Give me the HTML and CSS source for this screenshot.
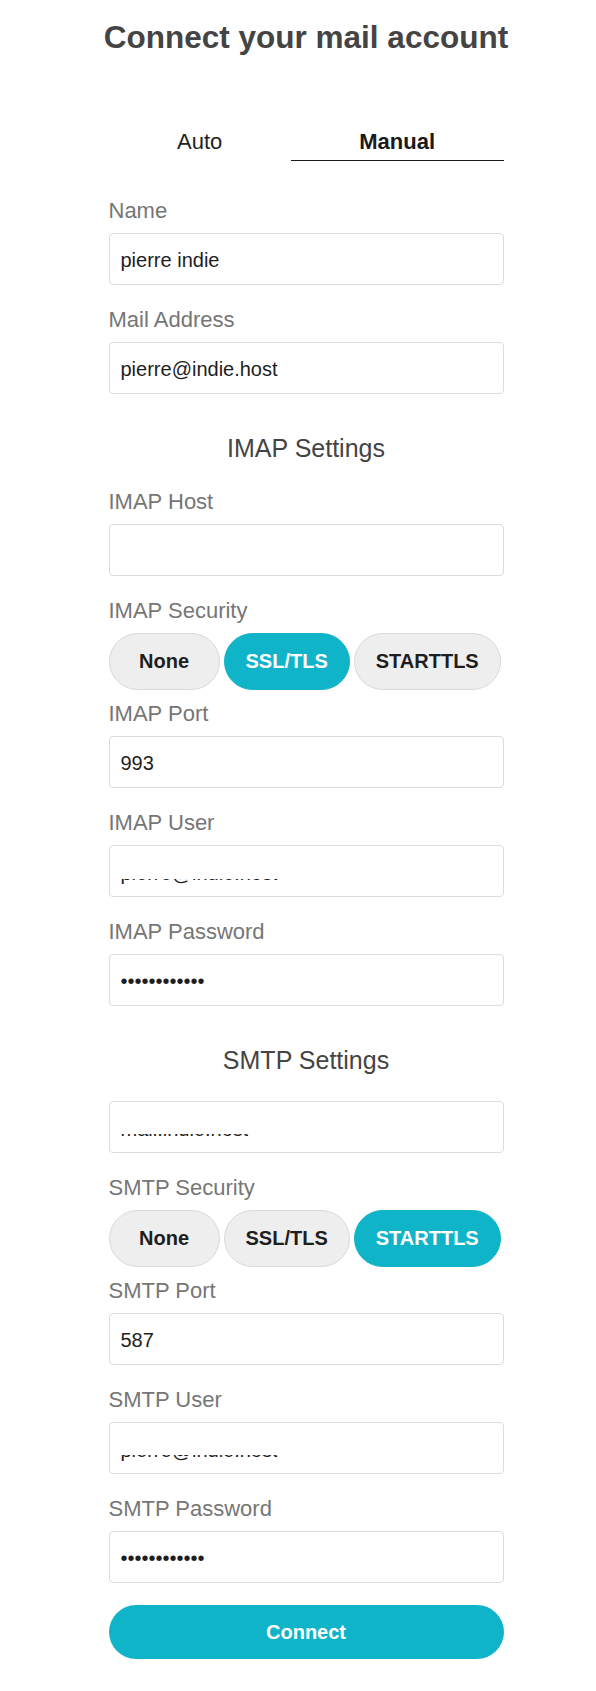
FILE: index.html
```html
<!DOCTYPE html>
<html lang="en">
<head>
<meta charset="utf-8">
<title>Connect your mail account</title>
<link rel="stylesheet" href="styles.css">
</head>
<body>
<div class="page">
  <h1 class="title">Connect your mail account</h1>
  <div class="tabs">
    <div class="tab">Auto</div>
    <div class="tab active">Manual</div>
  </div>
  <form class="form">
    <div class="field">
      <label class="label">Name</label>
      <input class="input" type="text" value="pierre indie">
    </div>
    <div class="field">
      <label class="label">Mail Address</label>
      <input class="input" type="text" value="pierre@indie.host">
    </div>

    <h2 class="section">IMAP Settings</h2>
    <div class="field">
      <label class="label">IMAP Host</label>
      <input class="input" type="text" value="">
    </div>
    <div class="field field-choice">
      <label class="label">IMAP Security</label>
      <div class="choices">
        <button type="button" class="choice">None</button>
        <button type="button" class="choice selected">SSL/TLS</button>
        <button type="button" class="choice">STARTTLS</button>
      </div>
    </div>
    <div class="field">
      <label class="label">IMAP Port</label>
      <input class="input" type="text" value="993">
    </div>
    <div class="field">
      <label class="label">IMAP User</label>
      <div class="input masked"><span class="mask-text mask-deep">pierre@indie.host</span></div>
    </div>
    <div class="field">
      <label class="label">IMAP Password</label>
      <input class="input" type="password" value="123456789012">
    </div>

    <h2 class="section">SMTP Settings</h2>
    <div class="field">
      <div class="input masked"><span class="mask-text">mail.indie.host</span></div>
    </div>
    <div class="field field-choice">
      <label class="label">SMTP Security</label>
      <div class="choices">
        <button type="button" class="choice">None</button>
        <button type="button" class="choice">SSL/TLS</button>
        <button type="button" class="choice selected">STARTTLS</button>
      </div>
    </div>
    <div class="field">
      <label class="label">SMTP Port</label>
      <input class="input" type="text" value="587">
    </div>
    <div class="field">
      <label class="label">SMTP User</label>
      <div class="input masked"><span class="mask-text">pierre@indie.host</span></div>
    </div>
    <div class="field">
      <label class="label">SMTP Password</label>
      <input class="input" type="password" value="123456789012">
    </div>

    <button type="button" class="connect">Connect</button>
  </form>
</div>
</body>
</html>
```

FILE: styles.css
```css
* {
  box-sizing: border-box;
}

html, body {
  margin: 0;
  padding: 0;
  background: #ffffff;
}

body {
  font-family: "Liberation Sans", Arial, sans-serif;
  color: #222222;
  padding-left: 16px;
}

.page {
  width: 395px;
  margin: 0 auto;
  padding-bottom: 31px;
}

.title {
  margin: 19px -30px 0;
  font-size: 31.5px;
  line-height: 36px;
  font-weight: 700;
  color: #444444;
  text-align: center;
  white-space: nowrap;
}

.tabs {
  display: flex;
  margin-top: 74px;
  margin-bottom: 37px;
}

.tab {
  flex: 1 1 auto;
  text-align: center;
  font-size: 22px;
  line-height: 26px;
  padding-bottom: 5px;
  border-bottom: 1px solid transparent;
  color: #222222;
}

.tab.active {
  font-weight: 700;
  color: #1a1a1a;
  border-bottom-color: #1a1a1a;
}

.form {
  display: flex;
  flex-direction: column;
}

.field {
  display: flex;
  flex-direction: column;
  margin-bottom: 22px;
}

.field-choice {
  margin-bottom: 11px;
}

.label {
  font-size: 22px;
  line-height: 26px;
  color: #767676;
  margin-bottom: 9px;
}

.input {
  display: block;
  width: 100%;
  height: 52px;
  margin: 0;
  padding: 2px 11px 0;
  font-family: "Liberation Sans", Arial, sans-serif;
  font-size: 20px;
  color: #1e1e1e;
  background: #ffffff;
  border: 1px solid #dcdcdc;
  border-radius: 4px;
  outline: none;
}

.masked {
  display: flex;
  align-items: center;
  padding-top: 3px;
}

.mask-text {
  display: inline-block;
  line-height: 24px;
  white-space: nowrap;
  clip-path: inset(17.5px 0 0 0);
}

.mask-deep {
  clip-path: inset(18.5px 0 0 0);
}

.section {
  margin: 17px 0 26px;
  font-size: 25px;
  line-height: 30px;
  font-weight: 400;
  color: #444444;
  text-align: center;
}

.choices {
  display: flex;
  gap: 4px;
}

.choice {
  height: 57px;
  min-width: 111px;
  padding: 0 21px;
  margin: 0;
  border: 1px solid #d9d9d9;
  border-radius: 29px;
  background: #eeeeee;
  color: #1e1e1e;
  font-family: "Liberation Sans", Arial, sans-serif;
  font-size: 20px;
  font-weight: 700;
}

.choice.selected {
  background: #0fb4c8;
  border-color: #0fb4c8;
  color: #ffffff;
}

.connect {
  width: 100%;
  height: 54px;
  margin: 0;
  padding: 0;
  border: none;
  border-radius: 27px;
  background: #0fb4c8;
  color: #ffffff;
  font-family: "Liberation Sans", Arial, sans-serif;
  font-size: 20px;
  font-weight: 700;
}
```
